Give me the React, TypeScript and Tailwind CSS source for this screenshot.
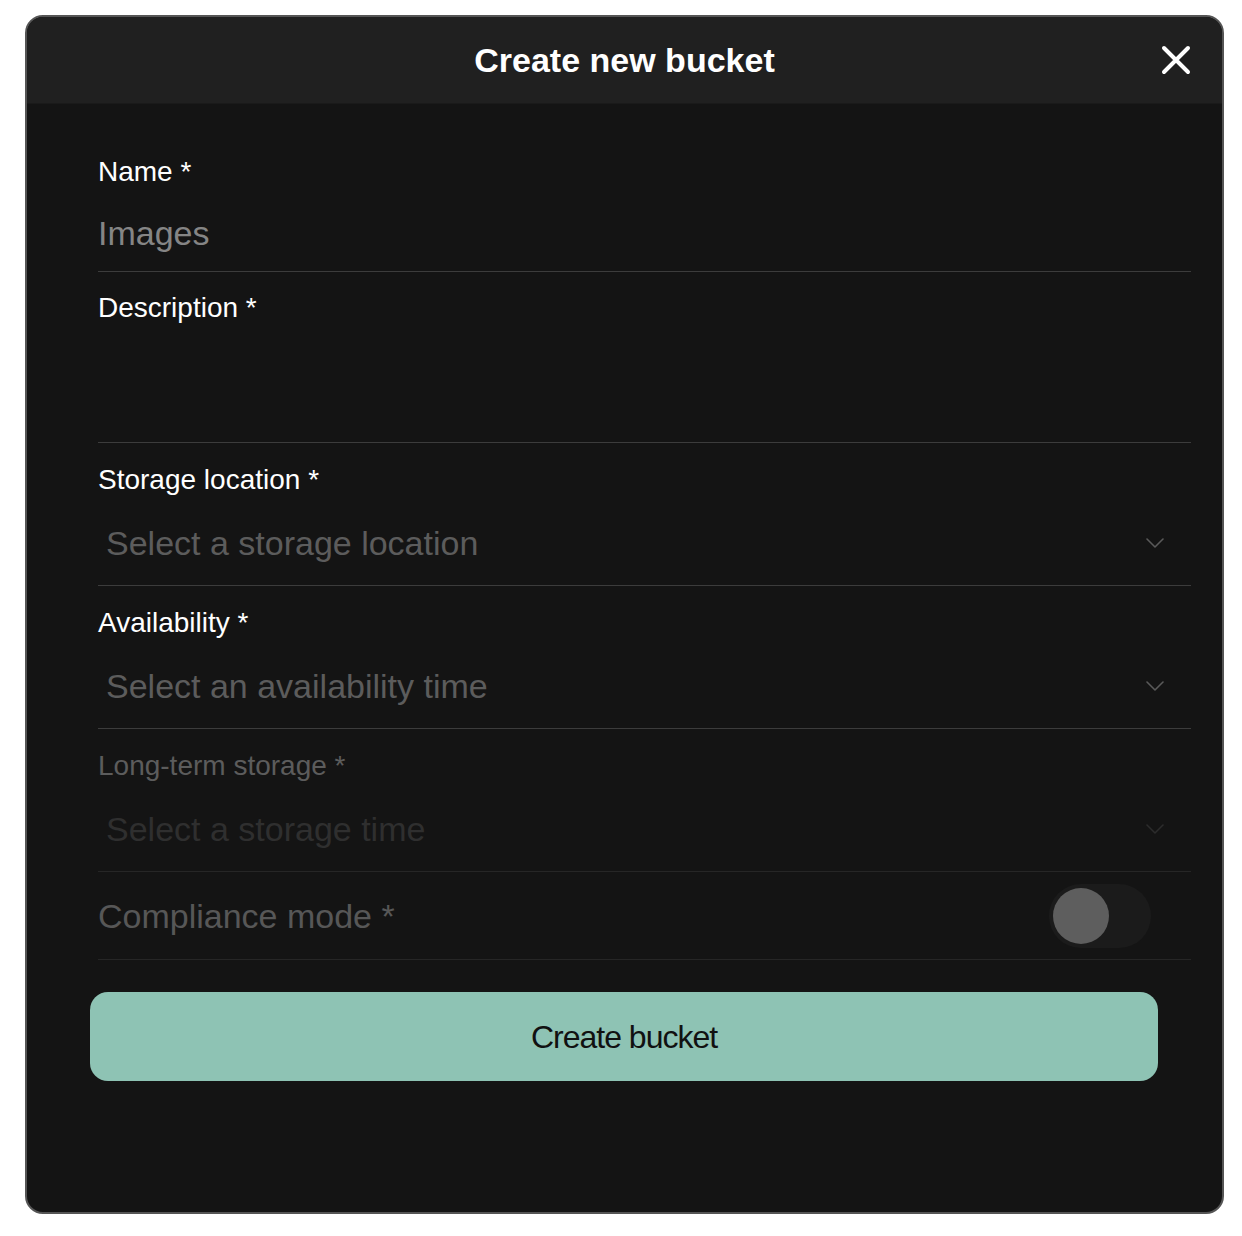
import React from "react";

function Chevron({ color }: { color: string }) {
  return (
    <svg width="18" height="10" viewBox="0 0 18 10" fill="none" className="shrink-0">
      <path d="M1 1l8 8 8-8" stroke={color} strokeWidth="1.6" strokeLinecap="round" strokeLinejoin="round" />
    </svg>
  );
}

function SelectField({
  label,
  placeholder,
  disabled = false,
}: {
  label: string;
  placeholder: string;
  disabled?: boolean;
}) {
  return (
    <div className={`flex flex-col border-b ${disabled ? "border-[#262626]" : "border-[#3c3c3c]"}`}>
      <label className={`mt-[21px] text-[28px] leading-[32px] ${disabled ? "text-[#5c5c5c]" : "text-white"}`}>
        {label}
      </label>
      <div className="flex items-center justify-between pl-[8px] pr-[27px] pt-[27px] pb-[22px]">
        <span className={`text-[34px] leading-[40px] ${disabled ? "text-[#2f2f2f]" : "text-[#5c5c5c]"}`}>
          {placeholder}
        </span>
        <Chevron color={disabled ? "#2c2c2c" : "#5a5a5a"} />
      </div>
    </div>
  );
}

export default function App() {
  return (
    <div className="min-h-screen bg-white pt-[15px] pl-[25px]" style={{ fontFamily: '"Liberation Sans", Arial, sans-serif' }}>
      <div className="flex h-[1199px] w-[1199px] flex-col overflow-hidden rounded-[18px] border-2 border-[#555] bg-[#141414]">
        <div className="relative flex h-[87px] shrink-0 items-center justify-center border-b border-[#1a1a1a] bg-[#202020]">
          <h1 className="text-[34px] font-bold leading-[40px] text-white">Create new bucket</h1>
          <button className="absolute right-[31px] top-[28px] flex h-[30px] w-[30px] items-center justify-center">
            <svg width="30" height="30" viewBox="0 0 30 30" fill="none">
              <path d="M3 3l24 24M27 3L3 27" stroke="#fff" strokeWidth="4" strokeLinecap="round" />
            </svg>
          </button>
        </div>

        <div className="flex flex-col pl-[71px] pr-[31px] pt-[52px]">
          <div className="flex flex-col border-b border-[#3c3c3c]">
            <label className="text-[28px] leading-[32px] text-white">Name *</label>
            <div className="pt-[25px] pb-[18px] text-[34px] leading-[40px] text-[#858585]">Images</div>
          </div>

          <div className="flex flex-col border-b border-[#3c3c3c]">
            <label className="mt-[20px] text-[28px] leading-[32px] text-white">Description *</label>
            <div className="h-[118px]" />
          </div>

          <SelectField label="Storage location *" placeholder="Select a storage location" />
          <SelectField label="Availability *" placeholder="Select an availability time" />
          <SelectField label="Long-term storage *" placeholder="Select a storage time" disabled />

          <div className="flex h-[88px] items-center justify-between border-b border-[#262626] pr-[40px]">
            <span className="text-[34px] leading-[40px] text-[#575757]">Compliance mode *</span>
            <div className="flex h-[64px] w-[102px] items-center rounded-full bg-[#1b1b1b] pl-[4px]">
              <div className="h-[56px] w-[56px] rounded-full bg-[#5e5e5e]" />
            </div>
          </div>

          <button className="-ml-[8px] mt-[32px] flex h-[89px] w-[1068px] items-center justify-center rounded-[18px] bg-[#8ec3b4] text-[32px] tracking-[-1px] text-[#111]">
            Create bucket
          </button>
        </div>
      </div>
    </div>
  );
}
